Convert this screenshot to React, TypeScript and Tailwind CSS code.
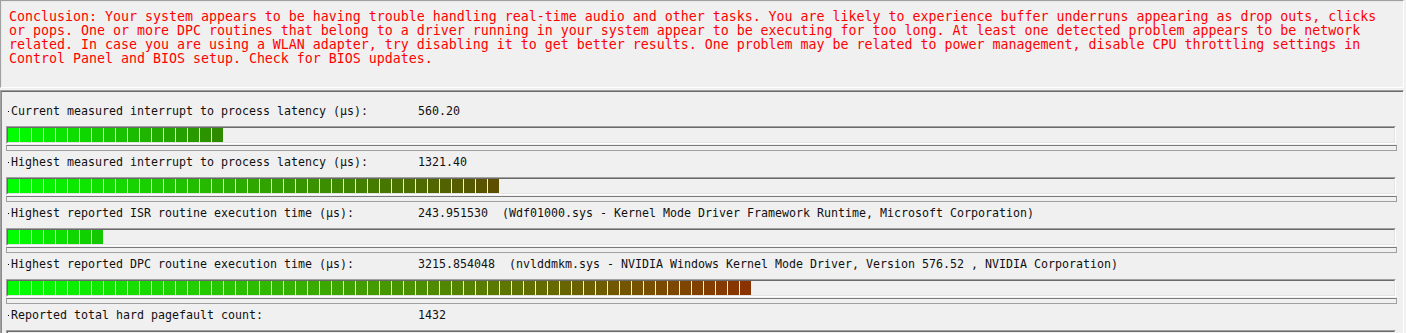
import React from "react";

const mono = { fontFamily: '"DejaVu Sans Mono", "Liberation Mono", monospace' };

const conclusion = [
  "Conclusion: Your system appears to be having trouble handling real-time audio and other tasks. You are likely to experience buffer underruns appearing as drop outs, clicks",
  "or pops. One or more DPC routines that belong to a driver running in your system appear to be executing for too long. At least one detected problem appears to be network",
  "related. In case you are using a WLAN adapter, try disabling it to get better results. One problem may be related to power management, disable CPU throttling settings in",
  "Control Panel and BIOS setup. Check for BIOS updates.",
];

type RGB = [number, number, number];

function blockColor(i: number, n: number, end: RGB) {
  const t = n <= 1 ? 0 : i / (n - 1);
  const r = Math.round(0 + (end[0] - 0) * t);
  const g = Math.round(255 + (end[1] - 255) * t);
  const b = Math.round(0 + (end[2] - 0) * t);
  return `rgb(${r},${g},${b})`;
}

function Bar({ blocks, end }: { blocks: number; end: RGB }) {
  return (
    <div className="ml-[4px] mr-[7px] h-[18px] border-t border-l border-t-[#a0a0a0] border-l-[#a0a0a0] border-r border-b border-r-white border-b-white">
      <div className="flex h-full gap-px border-t border-l border-t-[#696969] border-l-[#696969] border-r border-b border-r-[#e3e3e3] border-b-[#e3e3e3] bg-[#f0f0f0]">
        {Array.from({ length: blocks }).map((_, i) => (
          <div key={i} className="h-full w-[11px] shrink-0" style={{ background: blockColor(i, blocks, end) }} />
        ))}
      </div>
    </div>
  );
}

function Row({ label, value, blocks, end }: { label: string; value: string; blocks: number; end: RGB }) {
  return (
    <div className="pb-[3px]">
      <div className="flex h-[16px] items-center text-[11.63px] leading-[16px] text-[#101010]" style={mono}>
        <div className="flex w-[416px] shrink-0 items-center whitespace-pre pl-[6px]">
          <span className="mr-[2px] inline-block h-[1px] w-[1px] bg-black" />
          <span>{label}</span>
        </div>
        <div className="whitespace-pre">{value}</div>
      </div>
      <div className="mt-[7px]">
        <Bar blocks={blocks} end={end} />
      </div>
      <div className="ml-[4px] mr-[6px] mt-[1px] h-[6px] border border-[#a0a0a0] border-t-[#7a7a7a] bg-[#f0f0f0]" />
    </div>
  );
}

export default function App() {
  return (
    <div className="h-[333px] w-[1406px] overflow-hidden bg-[#f0f0f0]">
      <div className="h-[88px] w-[1404px] border-t border-l border-t-[#a0a0a0] border-l-[#a0a0a0] border-b border-r border-b-white border-r-white">
        <div className="h-full border-t border-l border-t-[#e8e8e8] border-l-[#e8e8e8] pl-[7px] pt-[8px] text-[13.29px] leading-[14px] text-[#ff0000]" style={mono}>
          {conclusion.map((l, i) => (
            <div key={i} className="whitespace-pre">{l}</div>
          ))}
        </div>
      </div>
      <div className="mt-[2px] h-[300px] w-[1404px] border-t border-l border-t-[#a0a0a0] border-l-[#a0a0a0] border-r border-r-white">
        <div className="h-full border-t border-l border-t-[#696969] border-l-[#8a8a8a] pt-[11px]">
          <Row label="Current measured interrupt to process latency (µs):" value="560.20" blocks={18} end={[46, 139, 0]} />
          <Row label="Highest measured interrupt to process latency (µs):" value="1321.40" blocks={41} end={[92, 80, 0]} />
          <Row label="Highest reported ISR routine execution time (µs):" value="243.951530  (Wdf01000.sys - Kernel Mode Driver Framework Runtime, Microsoft Corporation)" blocks={8} end={[20, 200, 0]} />
          <Row label="Highest reported DPC routine execution time (µs):" value="3215.854048  (nvlddmkm.sys - NVIDIA Windows Kernel Mode Driver, Version 576.52 , NVIDIA Corporation)" blocks={62} end={[138, 51, 0]} />
          <Row label="Reported total hard pagefault count:" value="1432" blocks={0} end={[0, 255, 0]} />
        </div>
      </div>
    </div>
  );
}
